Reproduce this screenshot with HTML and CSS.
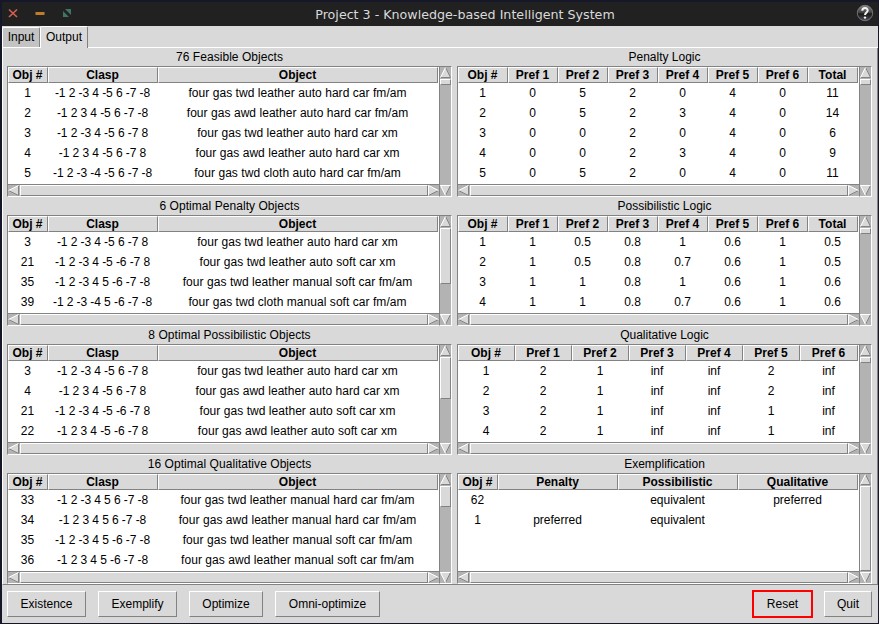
FILE: index.html
```html
<!DOCTYPE html>
<html lang="en">
<head>
<meta charset="utf-8">
<title>Project 3 - Knowledge-based Intelligent System</title>
<link rel="stylesheet" href="styles.css">
</head>
<body>
<div class="window">
  <header class="titlebar">
    <div class="controls">
      <svg width="80" height="24" viewBox="0 0 80 24">
        <path d="M7 7.5l8 7.5M15 7.5l-8 7.5" stroke="#d2604f" stroke-width="1.7" fill="none"/>
        <rect x="33.5" y="10" width="9" height="3" fill="#c07c2c"/>
        <path d="M63 7h6v6zM61 9v6h6z" fill="#3f7566"/>
      </svg>
    </div>
    <h1 class="title">Project 3 - Knowledge-based Intelligent System</h1>
    <div class="help">
      <svg width="18" height="18" viewBox="0 0 18 18">
        <defs><linearGradient id="orb" x1="0" y1="0" x2="0" y2="1"><stop offset="0" stop-color="#8c8c8c"/><stop offset=".5" stop-color="#3a3a3a"/><stop offset=".55" stop-color="#161616"/><stop offset="1" stop-color="#50505a"/></linearGradient></defs>
        <circle cx="9" cy="9" r="7.7" fill="url(#orb)" stroke="#77777f" stroke-width=".9"/>
        <path d="M6.3 6.7C6.4 3.2 11.8 3.2 11.7 6.5C11.6 8.4 9.2 8.6 9 11" fill="none" stroke="#f2f2f2" stroke-width="2"/>
        <circle cx="9" cy="13.6" r="1.2" fill="#f2f2f2"/>
      </svg>
    </div>
  </header>
  <nav class="tabs"><div class="tab">Input</div><div class="tab active">Output</div></nav>
  <main class="page">
    <div class="column" id="left"></div>
    <div class="column" id="right"></div>
  </main>
  <footer class="actions">
    <button class="btn existence">Existence</button>
    <button class="btn exemplify">Exemplify</button>
    <button class="btn optimize">Optimize</button>
    <button class="btn omni">Omni-optimize</button>
    <span class="spacer"></span>
    <button class="btn reset">Reset</button>
    <button class="btn quit">Quit</button>
  </footer>
</div>
<script src="script.js"></script>
</body>
</html>
```
FILE: styles.css
```css
* { box-sizing: border-box; }
body { margin: 0; background: #16182a; font: 12px/14px "Liberation Sans", Arial, sans-serif; color: #000; }
.window { width: 879px; height: 624px; padding: 2px 1px 1px 2px; display: flex; flex-direction: column; overflow: hidden; }
.titlebar { height: 24px; flex: none; background: #212121; display: grid; grid-template-columns: 80px 1fr 80px; }
.controls { height: 24px; }
.title { margin: 0 0 0 46px; padding-left: 4px; justify-self: center; font: 12.66px/25px "DejaVu Sans", sans-serif; color: #dadada; white-space: nowrap; }
.help { padding: 2px 4px 0 0; }
.help svg { display: block; margin-left: auto; }
.tabs { height: 22px; flex: none; background: #d9d9d9; display: flex; align-items: flex-end; box-shadow: inset 0 -1px #fff; }
.tab { width: 38px; height: 20px; margin-bottom: 1px; padding-top: 2px; text-align: center; background: #c3c3c3; border: 1px solid #fff; border-bottom: 0; border-right-color: #828282; border-radius: 2px 2px 0 0; }
.tab.active { width: 48px; height: 22px; margin: 0; padding-top: 3px; background: #d9d9d9; }
.page { height: 537px; flex: none; background: #d9d9d9; border-left: 1px solid #fff; border-right: 1px solid #828282; border-bottom: 1px solid #828282; padding-left: 4px; display: flex; gap: 5px; }
.column { display: flex; flex-direction: column; }
#left { width: 445px; }
#right { width: 415px; }
.caption { height: 18px; padding-top: 2px; text-align: center; white-space: nowrap; }
#left .caption { letter-spacing: .05px; }
.box { height: 111px; display: grid; grid-template-columns: 1fr 13px; grid-template-rows: 1fr 13px; }
.box.tall { height: 131px; }
.table { background: #fff; border-left: 1px solid #828282; border-top: 1px solid #828282; overflow: hidden; }
.row { display: grid; height: 20px; line-height: 20px; text-align: center; white-space: nowrap; }
.row span { padding-right: 1px; }
#left .row:not(.head) span:nth-child(2) { letter-spacing: -.08px; }
#left .row:not(.head) span:nth-child(3) { letter-spacing: .05px; }
.row.head { height: 16px; line-height: 15px; font-weight: bold; }
.head span { background: #d9d9d9; border: 1px solid #fff; border-right-color: #828282; border-bottom-color: #828282; height: 16px; }
.bar { background: #b3b3b3; border: 1px solid #828282; display: flex; }
.bar.v { grid-row: 1 / 3; grid-column: 2; flex-direction: column; border-right-color: #fff; border-bottom-color: #fff; }
.bar.h { border-right: 0; border-bottom-color: #fff; }
.bar svg { display: block; flex: none; width: 11px; height: 11px; }
.thumb { background: #d9d9d9; border: 1px solid #fff; border-right-color: #828282; border-bottom-color: #828282; flex: none; margin-top: 1px; }
.h .thumb { flex: 1; margin: 0 0 0 1px; }
.push { margin-top: auto; }
.actions { flex: 1; background: #d9d9d9; padding: 5px 6px 0 5px; display: flex; align-items: flex-start; }
.btn { height: 28px; margin: 0; padding: 0; font: inherit; line-height: 22px; color: #000; text-align: center; white-space: nowrap; background: #d9d9d9; border: 1px solid #fff; border-right-color: #828282; border-bottom-color: #828282; }
.btn:not(.reset) { height: 26px; margin-top: 1px; }
.existence { width: 79px; margin-right: 12px; }
.exemplify { width: 79px; margin-right: 12px; }
.optimize { width: 74px; margin-right: 12px; }
.omni { width: 105px; }
.spacer { flex: 1; }
.reset { width: 61px; margin-right: 11px; border: 2px solid #f00; }
.quit { width: 48px; }
```
FILE: script.js
```js
const leftCols = '40px 110px 280px';
const leftHead = ['Obj #', 'Clasp', 'Object'];
const prefs = ['Pref 1', 'Pref 2', 'Pref 3', 'Pref 4', 'Pref 5', 'Pref 6'];
const split = s => s.split('|');
const words = s => s.split(' ');

const panels = {
  left: [
    { title: '76 Feasible Objects', cols: leftCols, head: leftHead, thumb: 6, tall: true, rows: [
      '1|-1 2 -3 4 -5 6 -7 -8|four gas twd leather auto hard car fm/am',
      '2|-1 2 3 4 -5 6 -7 -8|four gas awd leather auto hard car fm/am',
      '3|-1 2 -3 4 -5 6 -7 8|four gas twd leather auto hard car xm',
      '4|-1 2 3 4 -5 6 -7 8|four gas awd leather auto hard car xm',
      '5|-1 2 -3 -4 -5 6 -7 -8|four gas twd cloth auto hard car fm/am'].map(split) },
    { title: '6 Optimal Penalty Objects', cols: leftCols, head: leftHead, thumb: 56, rows: [
      '3|-1 2 -3 4 -5 6 -7 8|four gas twd leather auto hard car xm',
      '21|-1 2 -3 4 -5 -6 -7 8|four gas twd leather auto soft car xm',
      '35|-1 2 -3 4 5 -6 -7 -8|four gas twd leather manual soft car fm/am',
      '39|-1 2 -3 -4 5 -6 -7 -8|four gas twd cloth manual soft car fm/am'].map(split) },
    { title: '8 Optimal Possibilistic Objects', cols: leftCols, head: leftHead, thumb: 42, rows: [
      '3|-1 2 -3 4 -5 6 -7 8|four gas twd leather auto hard car xm',
      '4|-1 2 3 4 -5 6 -7 8|four gas awd leather auto hard car xm',
      '21|-1 2 -3 4 -5 -6 -7 8|four gas twd leather auto soft car xm',
      '22|-1 2 3 4 -5 -6 -7 8|four gas awd leather auto soft car xm'].map(split) },
    { title: '16 Optimal Qualitative Objects', cols: leftCols, head: leftHead, thumb: 21, rows: [
      '33|-1 2 -3 4 5 6 -7 -8|four gas twd leather manual hard car fm/am',
      '34|-1 2 3 4 5 6 -7 -8|four gas awd leather manual hard car fm/am',
      '35|-1 2 -3 4 5 -6 -7 -8|four gas twd leather manual soft car fm/am',
      '36|-1 2 3 4 5 -6 -7 -8|four gas awd leather manual soft car fm/am'].map(split) }
  ],
  right: [
    { title: 'Penalty Logic', cols: 'repeat(8, 50px)', head: ['Obj #', ...prefs, 'Total'], thumb: 6, tall: true, rows: [
      '1 0 5 2 0 4 0 11', '2 0 5 2 3 4 0 14', '3 0 0 2 0 4 0 6', '4 0 0 2 3 4 0 9', '5 0 5 2 0 4 0 11'].map(words) },
    { title: 'Possibilistic Logic', cols: 'repeat(8, 50px)', head: ['Obj #', ...prefs, 'Total'], thumb: 6, rows: [
      '1 1 0.5 0.8 1 0.6 1 0.5', '2 1 0.5 0.8 0.7 0.6 1 0.5', '3 1 1 0.8 1 0.6 1 0.6', '4 1 1 0.8 0.7 0.6 1 0.6'].map(words) },
    { title: 'Qualitative Logic', cols: 'repeat(6, 57px) 58px', head: ['Obj #', ...prefs], thumb: 6, rows: [
      '1 2 1 inf inf 2 inf', '2 2 1 inf inf 2 inf', '3 2 1 inf inf 1 inf', '4 2 1 inf inf 1 inf'].map(words) },
    { title: 'Exemplification', cols: '40px 120px 120px 120px', head: ['Obj #', 'Penalty', 'Possibilistic', 'Qualitative'], thumb: 85, rows: [
      '62||equivalent|preferred', '1|preferred|equivalent|'].map(split) }
  ]
};

// Each arrow is a raised triangle: lit on its upper-left edges, shaded on the others.
const arrow = (fill, light, dark, cls = '') =>
  `<svg class="${cls}" viewBox="0 0 11 11"><path d="${fill}" fill="#d9d9d9"/><path d="${dark}" fill="none" stroke="#828282"/><path d="${light}" fill="none" stroke="#fff"/></svg>`;
const up = arrow('M5.5 0L11 11H0z', 'M.5 10.5L5.5 .5', 'M5.5 .5L10.5 10.5H.5');
const down = arrow('M0 0H11L5.5 11z', 'M10.5 .5H.5L5.5 10.5', 'M10.5 .5L5.5 10.5', 'push');
const leftArrow = arrow('M0 5.5L11 0V11z', 'M.5 5.5L10.5 .5', 'M10.5 .5V10.5L.5 5.5');
const rightArrow = arrow('M0 0L11 5.5L0 11z', 'M.5 10.5V.5L10.5 5.5', 'M10.5 5.5L.5 10.5');

const row = (cells, cols, cls) =>
  `<div class="row ${cls}" style="grid-template-columns:${cols}">${cells.map(c => `<span>${c}</span>`).join('')}</div>`;

for (const [side, list] of Object.entries(panels)) {
  document.getElementById(side).innerHTML = list.map(p => `
    <section><div class="caption">${p.title}</div>
    <div class="box ${p.tall ? 'tall' : ''}">
      <div class="table">${row(p.head, p.cols, 'head')}${p.rows.map(r => row(r, p.cols, '')).join('')}</div>
      <div class="bar v">${up}<div class="thumb" style="height:${p.thumb}px"></div>${down}</div>
      <div class="bar h">${leftArrow}<div class="thumb"></div>${rightArrow}</div>
    </div></section>`).join('');
}
```
